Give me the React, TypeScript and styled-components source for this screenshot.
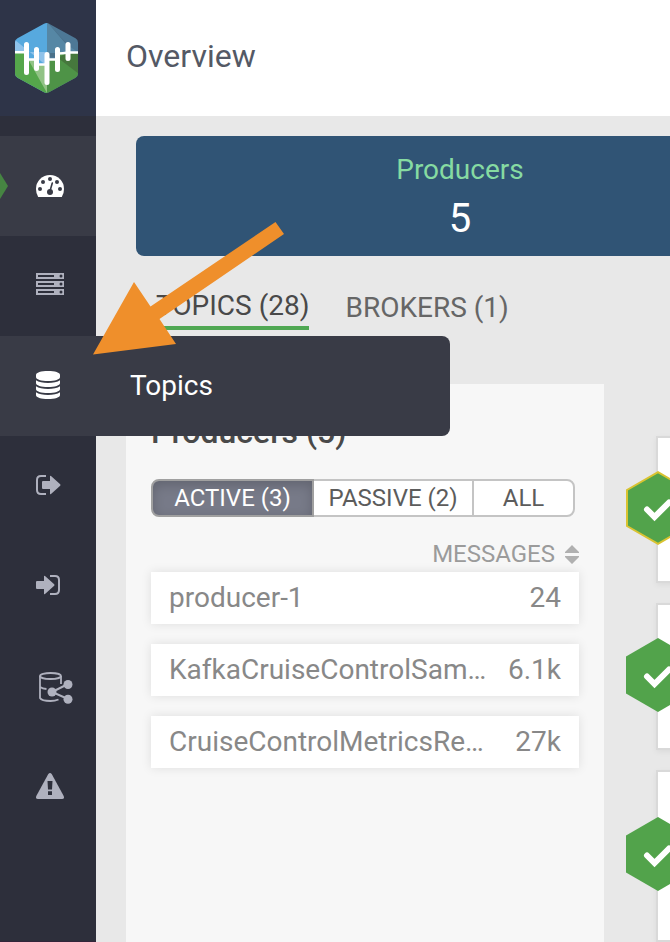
import React from "react";
import styled, { createGlobalStyle, css } from "styled-components";

const GlobalStyle = createGlobalStyle`
  *, *::before, *::after { box-sizing: border-box; }
  body {
    margin: 0;
    background: #e8e8e8;
    color: #494949;
    font-family: Roboto, "Liberation Sans", sans-serif;
    font-size: 28px;
    line-height: 32px;
  }
  button { font: inherit; cursor: pointer; }
`;

const Shell = styled.div`
  position: relative;
  display: flex;
  height: 100vh;
  overflow: hidden;
`;

const Sidebar = styled.aside`
  position: relative;
  z-index: 2;
  flex: 0 0 96px;
  border-bottom: 1px solid #32253a;
  background: #2d2f3b;
`;

const LogoLink = styled.a`
  display: flex;
  align-items: center;
  justify-content: center;
  height: 116px;
  padding-right: 4px;
  background: #2e3448;
`;

const NavList = styled.ul`
  margin: 20px 0 0;
  padding: 0;
  list-style: none;
`;

const NavItem = styled.li`
  position: relative;
`;

const NavLink = styled.a<{ $lit?: boolean }>`
  display: flex;
  align-items: center;
  height: 100px;
  padding-left: 36px;
  color: ${(p) => (p.$lit ? "#ffffff" : "#afb1be")};
  background: ${(p) => (p.$lit ? "#393b46" : "transparent")};
  text-decoration: none;

  svg { display: block; }
`;

const Pointer = styled.span`
  position: absolute;
  top: 37px;
  left: 0;
  width: 8px;
  height: 26px;
  background: #468542;
  clip-path: polygon(0 0, 100% 50%, 0 100%);
`;

const Flyout = styled.span`
  position: absolute;
  top: 0;
  left: 96px;
  display: flex;
  align-items: center;
  width: 354px;
  height: 100px;
  padding-left: 34px;
  border-radius: 0 8px 8px 0;
  background: #393b46;
  color: #ffffff;
`;

const Page = styled.div`
  flex: 1;
  min-width: 0;
  display: flex;
  flex-direction: column;
`;

const Header = styled.header`
  display: flex;
  align-items: center;
  flex: 0 0 116px;
  padding: 0 30px;
  background: #ffffff;
`;

const PageTitle = styled.h1`
  margin: 0 0 4px;
  color: #545965;
  font-size: 32px;
  font-weight: 400;
  line-height: 40px;
`;

const Main = styled.main`
  flex: 1;
  min-height: 0;
  display: flex;
  flex-direction: column;
  padding: 20px 0 0 30px;
  overflow: hidden;
`;

const Banner = styled.section`
  display: flex;
  flex: 0 0 120px;
  margin-left: 10px;
  border-radius: 8px 0 0 8px;
  background: #305475;
  overflow: hidden;
`;

const Stat = styled.div`
  flex: 0 0 648px;
  display: flex;
  flex-direction: column;
  align-items: center;
  padding-top: 18px;
`;

const StatLabel = styled.span`
  color: #86dba2;
`;

const StatValue = styled.span`
  margin-top: 8px;
  color: #ffffff;
  font-size: 40px;
  line-height: 50px;
`;

const Tabs = styled.div`
  display: flex;
  align-items: flex-start;
  gap: 36px;
  flex: 0 0 128px;
  padding: 32px 0 0 30px;
`;

const Tab = styled.button<{ $active?: boolean }>`
  padding: 4px 0;
  border: 0;
  background: transparent;
  color: #666666;
  white-space: nowrap;
  ${(p) =>
    p.$active &&
    css`
      padding: 2px 0 4px;
      border-bottom: 4px solid #50a853;
      color: #494949;
    `}
`;

const Columns = styled.div`
  flex: 1;
  min-height: 0;
  display: flex;
  gap: 52px;
`;

const Panel = styled.section`
  flex: 0 0 478px;
  padding: 28px 25px;
  background: #f7f7f7;
`;

const PanelTitle = styled.h2`
  margin: 0 0 27px;
  font-size: 32px;
  font-weight: 500;
  line-height: 40px;
`;

const Segments = styled.div`
  display: flex;
  height: 38px;
  margin-right: 4px;
  font-size: 24px;
  line-height: 32px;
`;

const Segment = styled.button<{ $active?: boolean }>`
  flex: 1 1 auto;
  margin-left: -2px;
  padding: 0 14px;
  border: 2px solid #c4c4c4;
  background: #ffffff;
  color: #5c5c5c;
  white-space: nowrap;

  &:first-child {
    flex: 0 0 163px;
    margin-left: 0;
    border-radius: 8px 0 0 8px;
  }
  &:nth-child(2) { flex: 0 0 162px; }
  &:last-child { border-radius: 0 8px 8px 0; }

  ${(p) =>
    p.$active &&
    css`
      position: relative;
      border-color: #a0a0a0;
      background: #777a88;
      color: #ffffff;
      box-shadow: inset 0 4px 12px rgba(0, 0, 0, 0.18);
    `}
`;

const Table = styled.table`
  display: block;
  margin-top: 21px;

  thead { display: block; }
  tbody {
    display: grid;
    gap: 20px;
    margin-top: 2px;
  }
  th, td {
    padding: 0;
    font-weight: 400;
  }
`;

const HeadRow = styled.tr`
  display: flex;
  justify-content: flex-end;
  color: #9b9b9b;
  font-size: 24px;
`;

const SortButton = styled.button`
  display: flex;
  align-items: center;
  gap: 10px;
  padding: 0;
  border: 0;
  background: transparent;
  color: inherit;
`;

const Row = styled.tr`
  display: flex;
  align-items: center;
  justify-content: space-between;
  height: 52px;
  padding: 0 18px;
  background: #ffffff;
  color: #888888;
  box-shadow: 0 0 10px rgba(0, 0, 0, 0.1);
`;

const NameCell = styled.td`
  max-width: 320px;
  overflow: hidden;
  text-overflow: ellipsis;
  white-space: nowrap;
`;

const Cards = styled.section`
  flex: 0 0 400px;
  display: flex;
  flex-direction: column;
  gap: 20px;
  padding-top: 52px;
`;

const Card = styled.article<{ $tall?: boolean }>`
  position: relative;
  flex: 0 0 ${(p) => (p.$tall ? "172px" : "147px")};
  border: 2px solid #d9d9d9;
  background: #ffffff;
  box-shadow: 0 2px 6px rgba(0, 0, 0, 0.06);
`;

const Badge = styled.svg`
  position: absolute;
  top: calc(50% - 39px);
  left: -32px;
`;

const Annotation = styled.svg`
  position: absolute;
  top: 222px;
  left: 93px;
  z-index: 3;
  pointer-events: none;
`;

const Logo = () => (
  <svg width="64" height="72" viewBox="14 22 64 72" aria-hidden="true">
    <defs>
      <clipPath id="logo-hex">
        <path d="M44 23.7Q46.5 22.3 49 23.7L75.5 38.3Q78 39.8 78 42.5V73.5Q78 76.2 75.5 77.7L49 92.3Q46.500 93.700 44 92.3L17.500 77.7Q15 76.200 15 73.500V42.500Q15 39.800 17.500 38.300Z" />
      </clipPath>
    </defs>
    <g clipPath="url(#logo-hex)">
      <path d="M14 22H47V94H14Z" fill="#57a9de" />
      <path d="M47 22H79V94H47Z" fill="#4d7896" />
      <path d="M47 22L79 57H47Z" fill="#4a7089" />
      <path d="M47 22L66 44L79 53H47Z" fill="#5687a5" />
      <path d="M15 40L47 66V52H15Z" fill="#8fc2ea" />
      <path d="M14 52H27V59H37V64H47V94H14Z" fill="#55a64b" />
      <path d="M47 62L52 59H58V52H79V94H47Z" fill="#4e9347" />
      <path d="M58 58L68 52H79V74Z" fill="#46783d" />
      <path d="M28 59H37V64H47V93Z" fill="#91c385" />
    </g>
    <path
      d="M26.500 44.500V72.500M36.500 49.500V68.500M47 54.500V82.500M57.500 49.500V69.500M68 44.500V58.500"
      stroke="#fff"
      strokeLinecap="round"
      strokeWidth="5"
    />
    <path d="M15 52.300H26M27 59.500H37M37 64.500H47M47 59.500H58M58 53.500Q63 53.500 68 52.500H78" stroke="#fff" strokeWidth="2.500" fill="none" />
  </svg>
);

const GaugeIcon = () => (
  <svg width="28" height="22" viewBox="0 0 28 22" aria-hidden="true">
    <path fill="currentColor" d="M14 0A14 14 0 0 0 0 14Q0 18.500 2.200 22H25.800Q28 18.500 28 14A14 14 0 0 0 14 0Z" />
    <g fill="#393b46">
      <circle cx="4" cy="14" r="2" />
      <circle cx="7" cy="7" r="2" />
      <circle cx="14" cy="4" r="2" />
      <circle cx="21" cy="7" r="2" />
      <circle cx="24" cy="14" r="2" />
      <circle cx="14" cy="17" r="3" />
    </g>
    <path d="M14 16L16.300 8" stroke="#393b46" strokeWidth="1.600" strokeLinecap="round" />
  </svg>
);

const ServersIcon = () => (
  <svg width="28" height="26" viewBox="0 0 28 26" aria-hidden="true">
    {[0, 8, 16].map((y) => (
      <g key={y}>
        <path fill="currentColor" d={`M0 ${y}H28V${y + 6}H0Z`} />
        <path fill="#2d2f3b" d={`M2 ${y + 2}H18V${y + 4}H2Z`} />
        <circle cx="25" cy={y + 3} r="1.500" fill="#2d2f3b" />
      </g>
    ))}
  </svg>
);

const DatabaseIcon = () => (
  <svg width="24" height="30" viewBox="0 0 24 30" aria-hidden="true">
    <g fill="currentColor">
      <path d="M0 4C0 1.500 5 0 12 0S24 1.500 24 4V6C24 8.500 19 10 12 10S0 8.500 0 6Z" />
      <path d="M0 9.300C2.500 11.200 7 12 12 12S21.500 11.200 24 9.300V12C24 14.500 19 16 12 16S0 14.500 0 12Z" />
      <path d="M0 15.300C2.500 17.200 7 18 12 18S21.500 17.200 24 15.300V18C24 20.500 19 22 12 22S0 20.500 0 18Z" />
      <path d="M0 21.300C2.500 23.200 7 24 12 24S21.500 23.200 24 21.300V24C24 26.500 19 28 12 28S0 26.500 0 24Z" />
    </g>
  </svg>
);

const SignOutIcon = () => (
  <svg width="25" height="22" viewBox="0 0 25 22" aria-hidden="true">
    <path d="M10 1H5Q1 1 1 5V15Q1 19 5 19H10" fill="none" stroke="currentColor" strokeWidth="2" />
    <path d="M7 6H14V1.500Q14 .2 15 1L24.200 9.300Q24.800 10 24.200 10.700L15 19Q14 19.800 14 18.500V14H7Q6 14 6 13V7Q6 6 7 6Z" fill="currentColor" />
  </svg>
);

const SignInIcon = () => (
  <svg width="24" height="22" viewBox="0 0 24 22" aria-hidden="true">
    <path d="M14 1H19Q23 1 23 5V15Q23 19 19 19H14" fill="none" stroke="currentColor" strokeWidth="2" />
    <path d="M1 6H8V1.500Q8 .2 9 1L18.200 9.300Q18.800 10 18.200 10.700L9 19Q8 19.800 8 18.500V14H1Q0 14 0 13V7Q0 6 1 6Z" fill="currentColor" />
  </svg>
);

const ShareDataIcon = () => (
  <svg width="37" height="36" viewBox="0 -4 37 36" aria-hidden="true">
    <g fill="none" stroke="currentColor" strokeWidth="1.800">
      <ellipse cx="14.500" cy="4" rx="10.500" ry="3" />
      <path d="M4 4V26C5 28 10 29 14.500 29Q19 29 22.500 27.500M25 4V12M4 15Q6.500 16.600 10.500 17" />
      <path d="M32 12L16 20L32 27" strokeWidth="2" />
    </g>
    <g fill="currentColor">
      <circle cx="32" cy="12.500" r="4.500" />
      <circle cx="16" cy="20" r="4.500" />
      <circle cx="32" cy="27.300" r="4.500" />
    </g>
  </svg>
);

const WarningIcon = () => (
  <svg width="28" height="26" viewBox="0 0 28 26" aria-hidden="true">
    <path fill="currentColor" d="M12.300 1Q14-1 15.700 1L27.700 23Q28.700 26 26 26H2Q-.7 26 .3 23Z" />
    <path fill="#2d2f3b" d="M11.500 8H16.500L16 16.500H12ZM12 18.300H16V22H12Z" />
  </svg>
);

const SortIcon = () => (
  <svg width="14" height="19" viewBox="0 0 14 19" aria-hidden="true">
    <path fill="#b0b0b0" d="M7 0L14 7V8H0V7ZM0 11H14V12L7 19L0 12Z" />
  </svg>
);

const StatusBadge = ({ outlined }: { outlined?: boolean }) => (
  <Badge width="64" height="74" viewBox="0 0 64 74" role="img" aria-label="Healthy">
    <path
      d={outlined ? "M32 1.200L63 19V55L32 72.800L1 55V19Z" : "M32 0L64 18.500V55.500L32 74L0 55.500V18.500Z"}
      fill="#52a34b"
      stroke={outlined ? "#d9c331" : "none"}
      strokeWidth="2"
    />
    <path d="M21 38.500L28.500 46L43 31.500" fill="none" stroke="#fff" strokeWidth="6" strokeLinecap="round" />
  </Badge>
);

const navigation = [
  { label: "Overview", icon: <GaugeIcon />, current: true },
  { label: "Brokers", icon: <ServersIcon /> },
  { label: "Topics", icon: <DatabaseIcon />, hovered: true },
  { label: "Producers", icon: <SignOutIcon /> },
  { label: "Consumers", icon: <SignInIcon /> },
  { label: "Replication", icon: <ShareDataIcon /> },
  { label: "Alerts", icon: <WarningIcon /> },
];

const producers = [
  { name: "producer-1", messages: "24" },
  { name: "KafkaCruiseControlSam…", messages: "6.1k" },
  { name: "CruiseControlMetricsRe…", messages: "27k" },
];

const filters = ["ACTIVE (3)", "PASSIVE (2)", "ALL"];

export default function App() {
  return (
    <>
      <GlobalStyle />
      <Shell>
        <Sidebar>
          <LogoLink href="#" aria-label="Home">
            <Logo />
          </LogoLink>
          <nav>
            <NavList>
              {navigation.map((item) => (
                <NavItem key={item.label}>
                  <NavLink
                    href="#"
                    aria-label={item.label}
                    aria-current={item.current ? "page" : undefined}
                    $lit={item.current || item.hovered}
                  >
                    {item.current && <Pointer />}
                    {item.icon}
                    {item.hovered && <Flyout>{item.label}</Flyout>}
                  </NavLink>
                </NavItem>
              ))}
            </NavList>
          </nav>
        </Sidebar>
        <Page>
          <Header>
            <PageTitle>Overview</PageTitle>
          </Header>
          <Main>
            <Banner>
              <Stat>
                <StatLabel>Producers</StatLabel>
                <StatValue>5</StatValue>
              </Stat>
            </Banner>
            <Tabs role="tablist">
              <Tab role="tab" aria-selected="true" $active>
                TOPICS (28)
              </Tab>
              <Tab role="tab" aria-selected="false">
                BROKERS (1)
              </Tab>
            </Tabs>
            <Columns>
              <Panel>
                <PanelTitle>Producers (5)</PanelTitle>
                <Segments role="group" aria-label="Producer filter">
                  {filters.map((label, index) => (
                    <Segment key={label} aria-pressed={index === 0} $active={index === 0}>
                      {label}
                    </Segment>
                  ))}
                </Segments>
                <Table>
                  <thead>
                    <HeadRow>
                      <th scope="col">
                        <SortButton>
                          MESSAGES
                          <SortIcon />
                        </SortButton>
                      </th>
                    </HeadRow>
                  </thead>
                  <tbody>
                    {producers.map((producer) => (
                      <Row key={producer.name}>
                        <NameCell>{producer.name}</NameCell>
                        <td>{producer.messages}</td>
                      </Row>
                    ))}
                  </tbody>
                </Table>
              </Panel>
              <Cards>
                <Card>
                  <StatusBadge outlined />
                </Card>
                <Card>
                  <StatusBadge />
                </Card>
                <Card $tall>
                  <StatusBadge />
                </Card>
              </Cards>
            </Columns>
          </Main>
        </Page>
        <Annotation width="192" height="133" viewBox="0 0 192 133" aria-hidden="true">
          <path d="M0 132.500L41 60L57.500 84.500L182.500 0L191 12L66.500 97L83 122Z" fill="#ef8f2b" />
        </Annotation>
      </Shell>
    </>
  );
}
